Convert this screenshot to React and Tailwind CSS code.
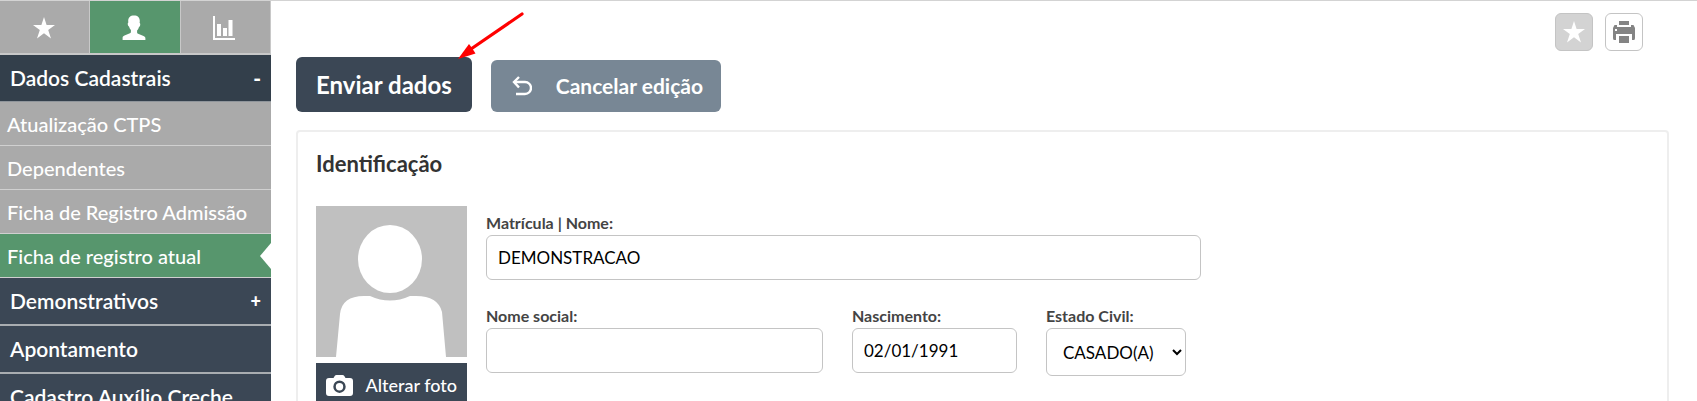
import React from "react";

const StarIcon = ({ className }) => (
    <svg viewBox="0 0 22 22" className={className} fill="currentColor" aria-hidden="true">
        <path d="M11 0 L13.6 8 H22 L15.2 13 L18 21.6 L11 16.3 L4 21.6 L6.8 13 L0 8 H8.4 Z" />
    </svg>
);

const UserIcon = ({ className }) => (
    <svg viewBox="0 0 24 26" className={className} fill="currentColor" aria-hidden="true">
        <path d="M12 0.5c3.8 0 5.8 2 5.8 5.6 0 .8-.1 1.5-.2 2 .7.3.8 1.3.5 2.4-.2.9-.6 1.4-1.1 1.6-.4 1.5-1 2.6-1.9 3.5v1.7c0 .8.3 1.2 1 1.5l5.400 2.300c1.3.6 1.9 1.2 1.9 2.400V25H.6v-2c0-1.200.6-1.800 1.900-2.400l5.400-2.300c.7-.3 1-.7 1-1.500v-1.700C8 14.200 7.400 13.100 7 11.600c-.5-.2-.9-.7-1.100-1.600-.3-1.100-.2-2.100.5-2.400-.1-.5-.2-.9-.2-1.500C6.200 2.500 8.200.5 12 .5z" />
    </svg>
);

const ChartIcon = ({ className }) => (
    <svg viewBox="0 0 22 24" className={className} fill="currentColor" aria-hidden="true">
        <path d="M0 0h2v22h20v2H0zM4 8h4v12H4zM10 12h4v8h-4zM15.500 4h4v16h-4z" />
    </svg>
);

const UndoIcon = ({ className }) => (
    <svg viewBox="0 0 20 20" className={className} fill="none" stroke="currentColor" strokeWidth="2.4" aria-hidden="true">
        <path d="M7 1 L2 6 L7 11.500" />
        <path d="M2 6 H13 A6 6 0 0 1 13 18 H4" />
    </svg>
);

const PrintIcon = ({ className }) => (
    <svg viewBox="0 0 24 24" className={className} fill="currentColor" aria-hidden="true">
        <path d="M7 1h10v4H7z" />
        <path fillRule="evenodd" d="M2 6q0-1 1-1h2v2h14V5h2q1 0 1 1l1 2v10q0 2-1 2h-2v-6H4v6H2q-1 0-1-2V8zM3 9v2h2V9z" />
        <path d="M7 16h10v7H7z" />
    </svg>
);

const CameraIcon = ({ className }) => (
    <svg viewBox="0 0 27 21" className={className} fill="currentColor" aria-hidden="true">
        <path fillRule="evenodd" d="M3 3h4.500l1.200-2Q9.300 0 10.500 0h6Q17.700 0 18.300 1l1.200 2H24q3 0 3 3v12q0 3-3 3H3q-3 0-3-3V6q0-3 3-3zM13.500 5.500a6.200 6.200 0 1 0 0 12.400a6.200 6.200 0 1 0 0-12.400zM13.500 8a3.700 3.700 0 1 1 0 7.400a3.700 3.700 0 1 1 0-7.400z" />
    </svg>
);

const Avatar = () => (
    <svg viewBox="0 0 151 151" className="w-full bg-[#c0c0c0]" role="img" aria-label="Foto">
        <ellipse cx="74" cy="53" rx="32" ry="34" fill="#fff" />
        <path d="M20 151 L24 108 Q26 90 48 90 H54 Q74 99 94 90 H100 Q122 90 126 106 L130 151 Z" fill="#fff" />
    </svg>
);

const tabs = [
    { name: "Favoritos", icon: <StarIcon className="size-[22px]" /> },
    { name: "Pessoal", icon: <UserIcon className="h-[26px] w-6" />, active: true },
    { name: "Gráficos", icon: <ChartIcon className="h-6 w-[22px]" /> },
];

const subItems = [
    { label: "Atualização CTPS" },
    { label: "Dependentes" },
    { label: "Ficha de Registro Admissão" },
    { label: "Ficha de registro atual", active: true },
];

const sections = [
    { label: "Demonstrativos", sign: "+" },
    { label: "Apontamento" },
    { label: "Cadastro Auxílio Creche" },
];

const Sidebar = () => (
    <aside className="w-[271px] shrink-0 text-white">
        <div className="flex h-[54px] gap-px border-b-2 border-[#c8c8c8] bg-[#c8c8c8] pr-px">
            {tabs.map((tab) => (
                <button
                    key={tab.name}
                    type="button"
                    aria-label={tab.name}
                    className={`flex flex-1 items-center justify-center pt-0.5 pr-0.5 ${tab.active ? "bg-[#57966d]" : "bg-[#aaaaaa]"}`}
                >
                    {tab.icon}
                </button>
            ))}
        </div>
        <nav>
            <button type="button" className="flex h-[47px] w-full items-center justify-between border-b border-[#8f959b] bg-[#333f4b] pr-2.5 pl-2.5 text-[21px] font-semibold">
                Dados Cadastrais <span className="font-black">-</span>
            </button>
            {subItems.map((item) => (
                <a
                    key={item.label}
                    href="#"
                    className={`relative flex h-11 items-center border-b border-[#d0d0d0] pl-[7px] text-[20px] font-medium ${item.active ? "bg-[#57966d]" : "bg-[#aaaaaa]"}`}
                >
                    {item.label}
                    {item.active && (
                        <span className="absolute right-0 border-y-[13px] border-r-[11px] border-y-transparent border-r-white" />
                    )}
                </a>
            ))}
            {sections.map((item) => (
                <button
                    key={item.label}
                    type="button"
                    className="flex h-12 w-full items-center justify-between border-b-2 border-[#a9adb1] bg-[#3b4755] pr-2.5 pl-2.5 text-[21px] font-semibold"
                >
                    {item.label} {item.sign && <span className="text-[18px] font-black">{item.sign}</span>}
                </button>
            ))}
        </nav>
    </aside>
);

const Field = ({ id, label, className, children, ...props }) => (
    <div className={className}>
        <label htmlFor={id} className="block h-6 text-[16px] leading-6 font-bold text-[#444]">{label}</label>
        {children || (
            <input
                id={id}
                type="text"
                {...props}
                className="block h-[45px] w-full rounded-md border border-[#c4c4c4] px-[11px] text-[17px] text-black outline-none"
            />
        )}
    </div>
);

const Toolbar = () => (
    <div className="flex items-end justify-between pr-[26px]">
        <div className="flex items-end gap-[19px] pt-14">
            <div className="relative">
                <button type="button" className="block h-[55px] rounded-md bg-[#3b4755] px-5 text-[24px] font-bold text-white">
                    Enviar dados
                </button>
                <svg viewBox="0 0 66 48" className="pointer-events-none absolute right-[-52px] bottom-[53px] h-12 w-[66px]" aria-hidden="true">
                    <path d="M64 3 L13 38" stroke="#f00" strokeWidth="3.2" strokeLinecap="round" />
                    <path d="M0 48 L11 33 L14 37 L17.5 42.5 Z" fill="#f00" />
                </svg>
            </div>
            <button type="button" className="flex h-[52px] items-center gap-6 rounded-md bg-[#788795] pr-[18px] pl-[21px] text-[21px] font-bold text-white">
                <UndoIcon className="size-5" />
                Cancelar edição
            </button>
        </div>
        <div className="flex gap-3 self-start pt-3">
            <button type="button" aria-label="Favoritar" className="flex size-[38px] items-center justify-center rounded-md border border-[#c4c4c4] bg-[#d3d3d3] text-white">
                <StarIcon className="size-[22px]" />
            </button>
            <button type="button" aria-label="Imprimir" className="flex size-[38px] items-center justify-center rounded-md border border-[#c4c4c4] text-[#848484]">
                <PrintIcon className="size-6" />
            </button>
        </div>
    </div>
);

export default function App() {
    return (
        <div className="flex h-screen overflow-hidden border-t border-[#d3d3d3] bg-white font-['Lato',sans-serif]">
            <Sidebar />
            <main className="min-w-0 flex-1 pr-7 pl-[25px]">
                <Toolbar />
                <section className="mt-[18px] rounded-sm border-2 border-[#eeeeee] px-[18px] pt-[18px] pb-8">
                    <h2 className="text-[22px] leading-7 font-bold text-[#333]">Identificação</h2>
                    <div className="mt-7 flex gap-[19px]">
                        <div className="w-[151px] shrink-0">
                            <Avatar />
                            <button type="button" className="mt-1.5 flex h-11 w-full items-center justify-between bg-[#3b4755] pr-2.5 pl-2.5 text-[18px] font-medium text-white">
                                <CameraIcon className="h-[21px] w-[27px]" />
                                Alterar foto
                            </button>
                        </div>
                        <form className="flex max-w-[715px] flex-1 flex-col gap-6 pt-[5px]">
                            <Field id="nome" label="Matrícula | Nome:" defaultValue="DEMONSTRACAO" />
                            <div className="flex gap-[29px]">
                                <Field id="social" label="Nome social:" className="w-[337px]" />
                                <Field id="nascimento" label="Nascimento:" className="w-[165px]" defaultValue="02/01/1991" />
                                <Field id="civil" label="Estado Civil:" className="w-[140px]">
                                    <select id="civil" className="block h-12 w-full rounded-md border border-[#c4c4c4] bg-white pr-3 pl-3 text-[17px] text-black">
                                        <option>CASADO(A)</option>
                                    </select>
                                </Field>
                            </div>
                        </form>
                    </div>
                </section>
            </main>
        </div>
    );
}
